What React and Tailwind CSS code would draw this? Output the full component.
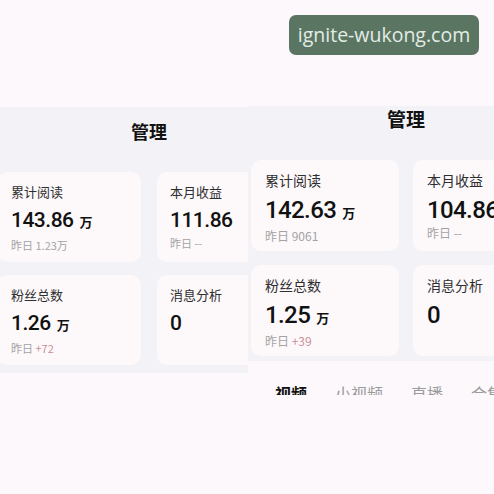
import React from "react";

const cn = '"Noto Sans CJK SC", "Noto Sans", sans-serif';
const num = 'Roboto, "Noto Sans CJK SC", sans-serif';

function StatCard({ label, value, unit, sub, delta, big }) {
  return (
    <div
      className={
        big
          ? "h-[91px] rounded-[10px] bg-[#fdf9fb] px-[14px] pt-[11px]"
          : "h-[90px] rounded-[10px] bg-[#fdf9fb] px-[13px] pt-[11px]"
      }
    >
      <div
        className={big ? "text-[14px] leading-[18px] text-[#2e2e2e]" : "text-[13px] leading-[18px] text-[#2e2e2e]"}
        style={{ fontFamily: cn }}
      >
        {label}
      </div>
      <div
        className={
          big
            ? "mt-[7px] flex items-baseline whitespace-nowrap text-[24px] leading-[28px] font-medium tracking-[-0.6px] text-[#111]"
            : "mt-[6px] flex items-baseline whitespace-nowrap text-[21px] leading-[26px] font-medium tracking-[-0.5px] text-[#111]"
        }
        style={{ fontFamily: num }}
      >
        {value}
        {unit && (
          <span className="ml-[6px] text-[13px] font-bold text-[#111]" style={{ fontFamily: cn }}>
            {unit}
          </span>
        )}
      </div>
      {sub !== undefined && (
        <div
          className={
            big
              ? "mt-[1px] text-[12px] leading-[16px] text-[#a3a3a3] whitespace-nowrap"
              : "mt-[2px] text-[11px] leading-[16px] text-[#a3a3a3] whitespace-nowrap"
          }
          style={{ fontFamily: cn }}
        >
          昨日 <span className={delta ? "text-[#c98f96]" : ""}>{sub}</span>
        </div>
      )}
    </div>
  );
}

export default function App() {
  return (
    <div className="relative flex h-[494px] w-[494px] items-start overflow-hidden bg-[#fcf8fb]">
      {/* first capture */}
      <div className="w-[248px] shrink-0 overflow-hidden pt-[107px]">
        <section className="ml-[-14px] h-[266px] w-[326px] bg-[#f3f3f7] px-[12px]">
          <h2
            className="h-[65px] pt-[12px] text-center text-[18px] leading-[24px] font-bold text-[#111]"
            style={{ fontFamily: cn }}
          >
            管理
          </h2>
          <div className="grid grid-cols-2 gap-x-[16px] gap-y-[13px]">
            <StatCard label="累计阅读" value="143.86" unit="万" sub="1.23万" />
            <StatCard label="本月收益" value="111.86" sub="--" />
            <StatCard label="粉丝总数" value="1.26" unit="万" sub="+72" delta />
            <StatCard label="消息分析" value="0" />
          </div>
        </section>
      </div>

      {/* second capture */}
      <div className="h-[395px] w-[246px] shrink-0 overflow-hidden pt-[106px]">
        <section className="ml-[-9px] w-[334px] bg-[#f3f3f7] px-[12px] pb-[5px]">
          <h2
            className="h-[54px] pt-[1px] text-center text-[19px] leading-[24px] font-bold text-[#111]"
            style={{ fontFamily: cn }}
          >
            管理
          </h2>
          <div className="grid grid-cols-2 gap-x-[14px] gap-y-[14px]">
            <StatCard big label="累计阅读" value="142.63" unit="万" sub="9061" />
            <StatCard big label="本月收益" value="104.86" sub="--" />
            <StatCard big label="粉丝总数" value="1.25" unit="万" sub="+39" delta />
            <StatCard big label="消息分析" value="0" />
          </div>
        </section>
        <nav
          className="flex gap-[28px] whitespace-nowrap pl-[27px] pt-[22px] text-[16px] leading-[20px] text-[#9a9a9a]"
          style={{ fontFamily: cn }}
        >
          <span className="font-bold text-[#111]">视频</span>
          <span>小视频</span>
          <span>直播</span>
          <span>合集</span>
        </nav>
      </div>

      <div
        className="absolute left-[289px] top-[15px] flex h-[40px] w-[190px] items-center justify-center rounded-[7px] bg-[#5a7562] text-[19.5px] text-[#e3ece5]"
        style={{ fontFamily: '"Open Sans", sans-serif' }}
      >
        ignite-wukong.com
      </div>
    </div>
  );
}
